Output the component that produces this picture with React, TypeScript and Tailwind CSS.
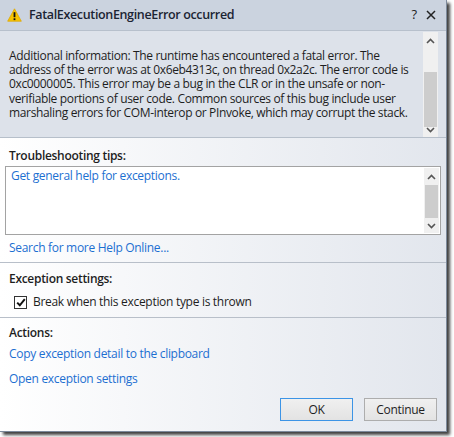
import React from "react";

const font = { fontFamily: '"Open Sans", "Noto Sans", sans-serif' };

function UpArrow() {
  return (
    <svg width="9" height="6" viewBox="0 0 9 6" className="block">
      <path d="M1 5 L4.5 1.5 L8 5" fill="none" stroke="#555" strokeWidth="1.6" />
    </svg>
  );
}
function DownArrow() {
  return (
    <svg width="9" height="6" viewBox="0 0 9 6" className="block">
      <path d="M1 1 L4.5 4.5 L8 1" fill="none" stroke="#555" strokeWidth="1.6" />
    </svg>
  );
}

function ScrollBar({ thumbTop, thumbH }: { thumbTop: number; thumbH: number }) {
  return (
    <div className="w-[15px] h-full bg-[#f0f0f0] flex flex-col items-center">
      <div className="h-[17px] flex items-center justify-center shrink-0">
        <UpArrow />
      </div>
      <div className="flex-1 w-full relative">
        <div
          className="absolute left-[1px] right-[1px] bg-[#cdcdcd]"
          style={{ top: thumbTop, height: thumbH }}
        />
      </div>
      <div className="h-[15px] flex items-center justify-center shrink-0">
        <DownArrow />
      </div>
    </div>
  );
}

export default function App() {
  return (
    <div className="w-[454px] h-[437px] bg-white relative overflow-hidden" style={font}>
      <div className="w-[447px] h-[432px] flex flex-col border-r border-b border-[#7d8a9c] shadow-[3px_3px_3px_rgba(0,0,0,0.75)] bg-gradient-to-r from-white to-[#e2e6ed]">
        {/* Title bar */}
        <div className="h-[31px] shrink-0 bg-[#cbd3df] border-b border-[#b7c0cc] flex items-center pl-[7px] pr-[10px]">
          <svg width="15" height="14" viewBox="0 0 15 14" className="shrink-0">
            <path d="M7.5 0.8 L14.3 13.2 L0.7 13.2 Z" fill="#f6c300" stroke="#e0a800" strokeWidth="0.8" strokeLinejoin="round" />
            <rect x="6.6" y="4.2" width="1.8" height="5" fill="#111" />
            <rect x="6.6" y="10.3" width="1.8" height="1.8" fill="#111" />
          </svg>
          <div className="ml-[7px] text-[12.5px] font-semibold text-[#1b2433] tracking-[-0.35px]">
            FatalExecutionEngineError occurred
          </div>
          <div className="flex-1" />
          <div className="text-[13px] font-medium text-[#222] mr-[9px]">?</div>
          <svg width="10" height="10" viewBox="0 0 10 10">
            <path d="M1 1 L9 9 M9 1 L1 9" stroke="#222" strokeWidth="1.5" />
          </svg>
        </div>

        {/* Info area */}
        <div className="h-[107px] shrink-0 bg-[#dde2ea] border-b border-[#b6bfca] flex">
          <div className="flex-1 pl-[9px] pt-[18px] text-[12px] leading-[14.2px] text-[#1e1e1e] tracking-[-0.35px]">
            Additional information: The runtime has encountered a fatal error. The address of the error was at 0x6eb4313c, on thread 0x2a2c. The error code is 0xc0000005. This error may be a bug in the CLR or in the unsafe or non-verifiable portions of user code. Common sources of this bug include user marshaling errors for COM-interop or PInvoke, which may corrupt the stack.
          </div>
          <div className="w-[15px] mr-[8px] pt-[1px]">
            <ScrollBar thumbTop={23} thumbH={55} />
          </div>
        </div>

        {/* Troubleshooting */}
        <div className="px-[5px] pt-[10px]">
          <div className="pl-[4px] text-[12px] font-semibold text-[#1e1e1e] leading-[16px] tracking-[-0.3px]">
            Troubleshooting tips:
          </div>
          <div className="mt-[2px] h-[69px] w-[436px] border border-[#a3a3a3] bg-white flex">
            <div className="flex-1 pl-[5px] pt-[1px] text-[12px] text-[#1c6fd1] leading-[16px] tracking-[-0.3px]">
              Get general help for exceptions.
            </div>
            <div className="pt-[1px] pb-[1px] pr-[1px]">
              <ScrollBar thumbTop={0} thumbH={33} />
            </div>
          </div>
          <div className="pl-[4px] mt-[5px] text-[12px] text-[#1c6fd1] leading-[16px] tracking-[-0.3px]">
            Search for more Help Online...
          </div>
        </div>

        <div className="mt-[6px] h-px bg-[#b8bfc9] w-full" />

        {/* Exception settings */}
        <div className="px-[9px] pt-[8px]">
          <div className="text-[12px] font-semibold text-[#1e1e1e] leading-[16px] tracking-[-0.3px]">
            Exception settings:
          </div>
          <div className="mt-[7px] flex items-center pl-[5px]">
            <div className="w-[13px] h-[13px] border border-[#333] bg-white flex items-center justify-center">
              <svg width="10" height="9" viewBox="0 0 10 9">
                <path d="M1.2 4.6 L3.8 7.3 L8.8 1.2" fill="none" stroke="#111" strokeWidth="2" />
              </svg>
            </div>
            <div className="ml-[6px] text-[12px] text-[#1e1e1e] leading-[16px] tracking-[-0.3px]">
              Break when this exception type is thrown
            </div>
          </div>
        </div>

        <div className="mt-[7px] h-px bg-[#b8bfc9] w-full" />

        {/* Actions */}
        <div className="px-[9px] pt-[7px]">
          <div className="text-[12px] font-semibold text-[#1e1e1e] leading-[16px] tracking-[-0.3px]">
            Actions:
          </div>
          <div className="mt-[5px] text-[12px] text-[#1c6fd1] leading-[16px] tracking-[-0.3px]">
            Copy exception detail to the clipboard
          </div>
          <div className="mt-[9px] text-[12px] text-[#1c6fd1] leading-[16px] tracking-[-0.3px]">
            Open exception settings
          </div>
        </div>

        <div className="flex-1" />

        {/* Buttons */}
        <div className="flex justify-end gap-[11px] pr-[9px] pb-[10px]">
          <button className="w-[73px] h-[23px] border border-[#3c94e6] bg-gradient-to-b from-[#f0f0f0] to-[#e3e3e3] text-[12px] text-[#1e1e1e] tracking-[-0.3px]">
            OK
          </button>
          <button className="w-[73px] h-[23px] border border-[#adadad] bg-gradient-to-b from-[#f0f0f0] to-[#e3e3e3] text-[12px] text-[#1e1e1e] tracking-[-0.3px]">
            Continue
          </button>
        </div>
      </div>
    </div>
  );
}
